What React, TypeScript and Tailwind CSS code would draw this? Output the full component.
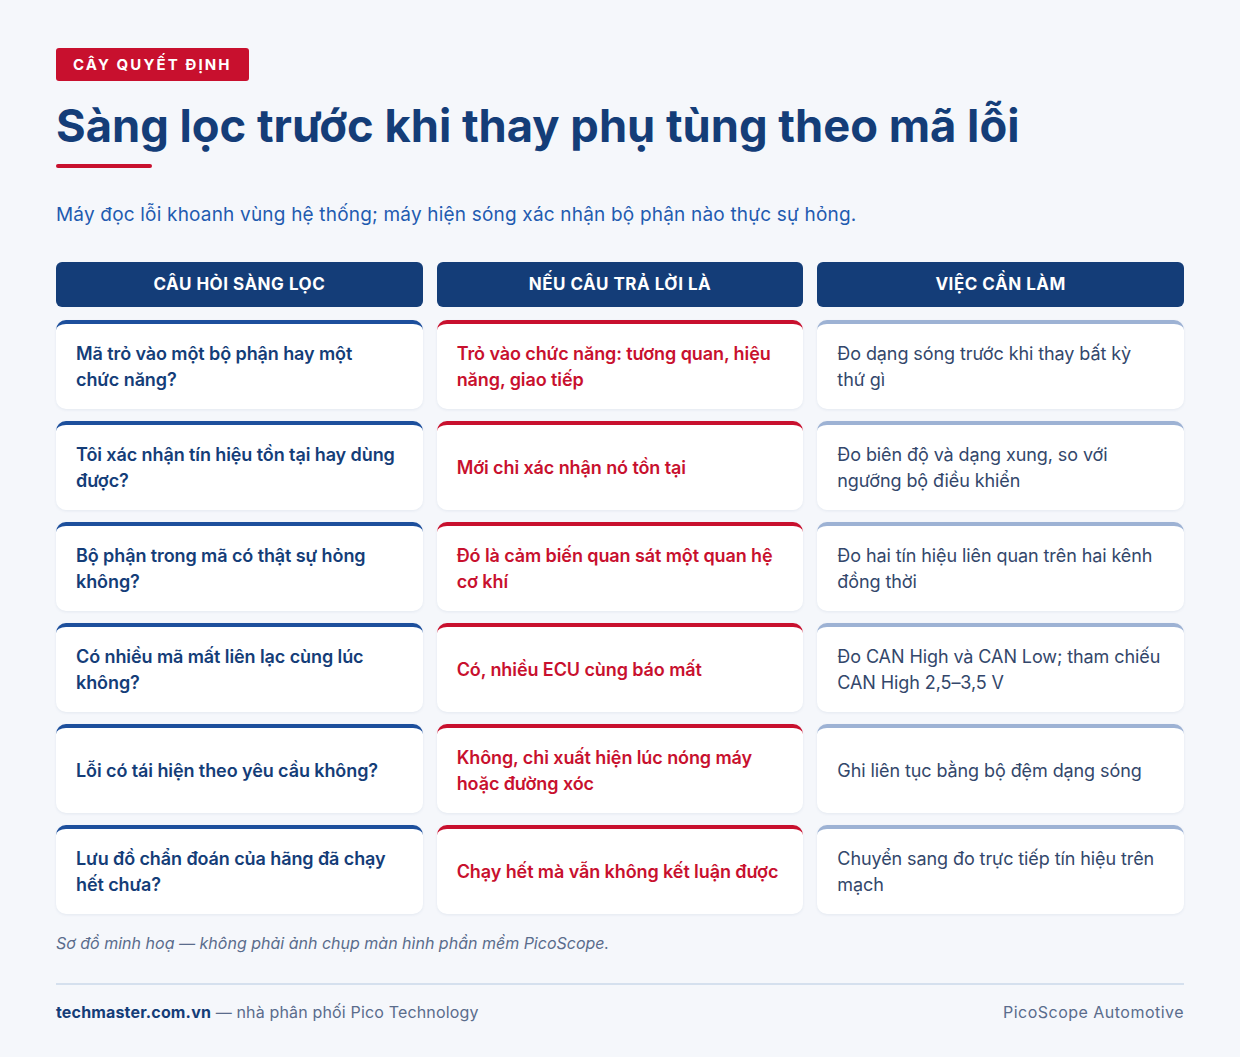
const rows = [
  {
    q: ['Mã trỏ vào một bộ phận hay một', 'chức năng?'],
    a: ['Trỏ vào chức năng: tương quan, hiệu', 'năng, giao tiếp'],
    d: ['Đo dạng sóng trước khi thay bất kỳ', 'thứ gì'],
  },
  {
    q: ['Tôi xác nhận tín hiệu tồn tại hay dùng', 'được?'],
    a: ['Mới chỉ xác nhận nó tồn tại'],
    d: ['Đo biên độ và dạng xung, so với', 'ngưỡng bộ điều khiển'],
  },
  {
    q: ['Bộ phận trong mã có thật sự hỏng', 'không?'],
    a: ['Đó là cảm biến quan sát một quan hệ', 'cơ khí'],
    d: ['Đo hai tín hiệu liên quan trên hai kênh', 'đồng thời'],
  },
  {
    q: ['Có nhiều mã mất liên lạc cùng lúc', 'không?'],
    a: ['Có, nhiều ECU cùng báo mất'],
    d: ['Đo CAN High và CAN Low; tham chiếu', 'CAN High 2,5–3,5 V'],
  },
  {
    q: ['Lỗi có tái hiện theo yêu cầu không?'],
    a: ['Không, chỉ xuất hiện lúc nóng máy', 'hoặc đường xóc'],
    d: ['Ghi liên tục bằng bộ đệm dạng sóng'],
  },
  {
    q: ['Lưu đồ chẩn đoán của hãng đã chạy', 'hết chưa?'],
    a: ['Chạy hết mà vẫn không kết luận được'],
    d: ['Chuyển sang đo trực tiếp tín hiệu trên', 'mạch'],
  },
];

const Cell = ({ lines, kind }: { lines: string[]; kind: 'q' | 'a' | 'd' }) => {
  const border =
    kind === 'q' ? 'border-[#1d4f9c]' : kind === 'a' ? 'border-[#c8102e]' : 'border-[#9db2d4]';
  const txt =
    kind === 'q'
      ? 'text-[#143d78] font-semibold'
      : kind === 'a'
        ? 'text-[#c8102e] font-semibold'
        : 'text-[#33476b] font-normal';
  return (
    <div
      className={`h-[89px] bg-white rounded-[10px] border-t-4 ${border} shadow-[0_1px_3px_rgba(20,61,120,0.08)] flex items-center pl-5 pr-2 overflow-hidden`}
    >
      <p className={`text-[18px] leading-[26px] tracking-[-0.005em] ${txt}`}>
        {lines.map((l) => (
          <span key={l} className="block whitespace-nowrap">
            {l}
          </span>
        ))}
      </p>
    </div>
  );
};

export default function App() {
  return (
    <div
      className="w-[1240px] h-[1057px] bg-[#f5f7fb] px-14 pt-12"
      style={{ fontFamily: 'Inter, "Noto Sans", sans-serif' }}
    >
      <span className="inline-block bg-[#c8102e] text-white text-[15px] font-bold tracking-[0.14em] px-[17px] h-[33px] leading-[33px] rounded-[3px]">
        CÂY QUYẾT ĐỊNH
      </span>
      <h1 className="mt-[16px] text-[45.3px] leading-[58px] font-bold text-[#143d78]">
        Sàng lọc trước khi thay phụ tùng theo mã lỗi
      </h1>
      <div className="mt-[9px] w-24 h-1 rounded-full bg-[#c8102e]" />
      <p className="mt-[34px] text-[19px] leading-[26px] tracking-[0.01em] text-[#1f5bb0]">
        Máy đọc lỗi khoanh vùng hệ thống; máy hiện sóng xác nhận bộ phận nào thực sự hỏng.
      </p>

      <div className="mt-[34px] grid grid-cols-3 gap-x-[14px] gap-y-3">
        {['CÂU HỎI SÀNG LỌC', 'NẾU CÂU TRẢ LỜI LÀ', 'VIỆC CẦN LÀM'].map((h) => (
          <div
            key={h}
            className="h-[45px] rounded-[6px] bg-[#143d78] text-white text-[17px] font-bold tracking-[0.03em] flex items-center justify-center mb-[1px]"
          >
            {h}
          </div>
        ))}
        {rows.map((r, i) => (
          <div key={i} className="contents">
            <Cell lines={r.q} kind="q" />
            <Cell lines={r.a} kind="a" />
            <Cell lines={r.d} kind="d" />
          </div>
        ))}
      </div>

      <p className="mt-[17px] text-[16px] italic text-[#5a6c8c]">
        Sơ đồ minh hoạ — không phải ảnh chụp màn hình phần mềm PicoScope.
      </p>
      <div className="mt-[28px] h-[2px] bg-[#d5e0ee]" />
      <div className="mt-[15px] flex justify-between text-[16px] text-[#5a6c8c] tracking-[0.01em]">
        <p>
          <span className="font-bold text-[#143d78]">techmaster.com.vn</span> — nhà phân phối Pico
          Technology
        </p>
        <p className="tracking-[0.03em]">PicoScope Automotive</p>
      </div>
    </div>
  );
}
